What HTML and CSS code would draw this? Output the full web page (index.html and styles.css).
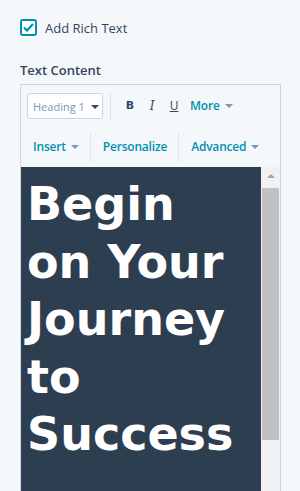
FILE: index.html
```html
<!DOCTYPE html>
<html>
<head>
  <title>Rich Text</title>
  <link rel="stylesheet" href="styles.css">
</head>
<body>
  <label class="check">
    <span class="box">
      <svg width="11" height="9" viewBox="0 0 11 9"><path d="M1 4.5l3 3L10 1" fill="none" stroke="#0091ae" stroke-width="2.2"/></svg>
    </span>
    Add Rich Text
  </label>

  <div class="field-label">Text Content</div>

  <div class="editor">
    <div class="toolbar">
      <div class="row">
        <div class="select"><span class="select-text">Heading 1</span> <span class="caret dark"></span></div>
        <div class="sep"></div>
        <span class="fmt b">B</span>
        <span class="fmt i">I</span>
        <span class="fmt u">U</span>
        <span class="menu more">More <span class="caret"></span></span>
      </div>
      <div class="row row2">
        <span class="menu">Insert <span class="caret"></span></span>
        <div class="sep tall"></div>
        <span class="menu">Personalize</span>
        <div class="sep tall"></div>
        <span class="menu">Advanced <span class="caret"></span></span>
      </div>
    </div>
    <div class="body">
      <div class="content">
        <h1>Begin on Your Journey to Success</h1>
      </div>
      <div class="scrollbar">
        <div class="arrow"></div>
        <div class="thumb"></div>
      </div>
    </div>
  </div>
</body>
</html>
```

FILE: styles.css
```css
body {
  margin: 0;
  padding: 19px 19px 0 20px;
  background: #f5f8fa;
  font-family: "Open Sans", sans-serif;
  color: #33475b;
  height: 491px;
  overflow: hidden;
  box-sizing: border-box;
}

.check {
  display: flex;
  align-items: center;
  gap: 8px;
  font-size: 13px;
  height: 17px;
}
.box {
  width: 13px;
  height: 13px;
  border: 2px solid #0091ae;
  border-radius: 3px;
  background: #fff;
  display: flex;
  align-items: center;
  justify-content: center;
}

.field-label {
  margin-top: 25px;
  font-size: 13px;
  font-weight: 600;
  line-height: 18px;
}

.editor {
  margin-top: 5px;
  border: 1px solid #cbd6e2;
  width: 259px;
}

.toolbar { background: #f5f8fa; }
.row {
  display: flex;
  align-items: center;
  height: 41px;
  padding: 0 0 0 6px;
  white-space: nowrap;
}
.row2 { height: 41px; padding-left: 0; }

.select {
  width: 76px;
  height: 26px;
  box-sizing: border-box;
  flex-shrink: 0;
  margin-top: 1px;
  border: 1px solid #cbd6e2;
  border-radius: 3px;
  background: #fff;
  font-size: 11px;
  color: #7c98b6;
  display: flex;
  align-items: center;
  padding-left: 5px;
  gap: 6px;
}
.sep {
  width: 1px;
  height: 27px;
  flex-shrink: 0;
  background: #dfe3eb;
  margin: 1px 8px 0 7px;
}
.sep.tall { height: 28px; margin: 0 10px 0 11px; }

.fmt {
  font-size: 12px;
  width: 22px;
  text-align: center;
  color: #33475b;
}
.fmt.b { font-weight: 700; font-family: "DejaVu Sans", sans-serif; font-size: 11px; }
.fmt.i { font-style: italic; font-family: "DejaVu Serif", serif; font-size: 12px; }
.fmt.u { text-decoration: underline; font-size: 12px; }

.menu {
  color: #0091ae;
  font-size: 12px;
  font-weight: 600;
  display: flex;
  align-items: center;
  gap: 5px;
  margin-left: 2px;
  letter-spacing: -0.2px;
}
.menu.more { margin-left: 5px; }
.row2 .menu:first-child { margin-left: 12px; }

.caret {
  width: 0;
  height: 0;
  border-left: 4px solid transparent;
  border-right: 4px solid transparent;
  border-top: 4px solid #7c98b6;
  margin-top: 1px;
}
.caret.dark { border-top-color: #33475b; }

.body {
  display: flex;
  height: 340px;
}
.content {
  flex: 1;
  background: #2d3e50;
  padding: 9px 17px 0 6px;
  overflow: hidden;
}
.content h1 {
  margin: 0;
  color: #fff;
  font-family: "DejaVu Sans", sans-serif;
  font-weight: 700;
  font-size: 46px;
  line-height: 57.5px;
}

.scrollbar {
  width: 19px;
  background: #f1f1f1;
  display: flex;
  flex-direction: column;
  align-items: center;
}
.arrow {
  margin-top: 7px;
  width: 0;
  height: 0;
  border-left: 4px solid transparent;
  border-right: 4px solid transparent;
  border-bottom: 4px solid #a3a3a3;
}
.thumb {
  margin-top: 10px;
  width: 17px;
  height: 252px;
  background: #c1c1c1;
}
```
